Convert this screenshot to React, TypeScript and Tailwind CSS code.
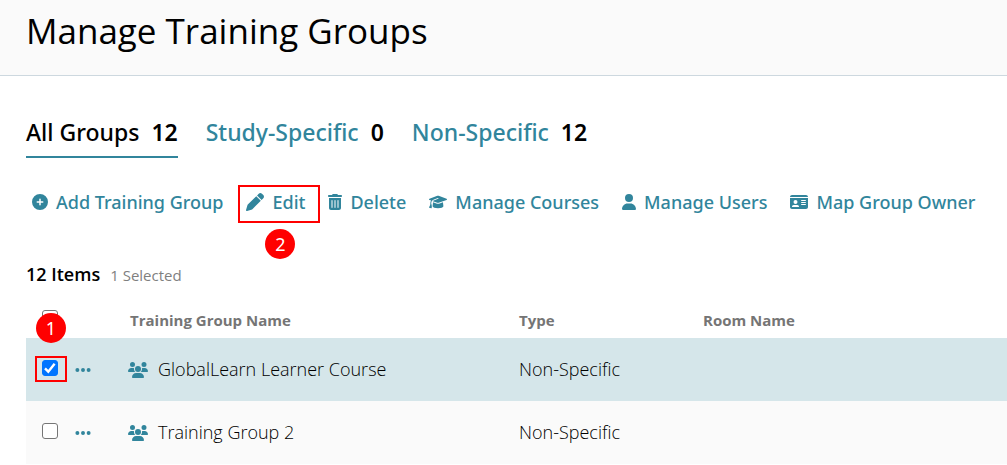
import { useState } from 'react';
import type { ReactNode } from 'react';
import type { IconType } from 'react-icons';
import {
  FaCirclePlus,
  FaEllipsis,
  FaGraduationCap,
  FaIdCard,
  FaPen,
  FaTrashCan,
  FaUser,
  FaUsers,
} from 'react-icons/fa6';

const tabs = [
  { label: 'All Groups', count: 12 },
  { label: 'Study-Specific', count: 0 },
  { label: 'Non-Specific', count: 12 },
];

const groups = [
  { id: 1, name: 'GlobalLearn Learner Course', type: 'Non-Specific', room: '' },
  { id: 2, name: 'Training Group 2', type: 'Non-Specific', room: '' },
];

function Step({ n, className }: { n: number; className: string }) {
  return (
    <span
      className={`pointer-events-none absolute z-10 flex size-[30px] items-center justify-center rounded-full bg-[#ff0000] font-['Noto_Sans',sans-serif] text-[18px] leading-none font-normal text-white ${className}`}
    >
      {n}
    </span>
  );
}

function Action({ icon: Icon, iconClass, children }: { icon: IconType; iconClass: string; children: ReactNode }) {
  return (
    <button type="button" className="flex cursor-pointer items-center gap-2 whitespace-nowrap">
      <Icon className={`shrink-0 ${iconClass}`} aria-hidden="true" />
      {children}
    </button>
  );
}

const box =
  'block size-4 cursor-pointer appearance-none rounded-[3px] border border-[#767676] bg-white checked:border-[#0075ff] checked:bg-[#0075ff]';

function Checkbox({ label, checked, onChange }: { label: string; checked: boolean; onChange: () => void }) {
  return (
    <span className="relative block size-4">
      <input type="checkbox" aria-label={label} className={box} checked={checked} onChange={onChange} />
      {checked && (
        <svg viewBox="0 0 16 16" className="pointer-events-none absolute inset-0 size-4" aria-hidden="true">
          <path d="M3 8.4 6.3 11.7 12.6 3.8" fill="none" stroke="#fff" strokeWidth="2.4" />
        </svg>
      )}
    </span>
  );
}

export default function App() {
  const [tab, setTab] = useState(0);
  const [selected, setSelected] = useState<number[]>([1]);
  const toggle = (id: number) =>
    setSelected((s) => (s.includes(id) ? s.filter((x) => x !== id) : [...s, id]));
  const all = selected.length === groups.length;

  return (
    <div className="bg-white font-['Open_Sans',sans-serif] text-black">
      <header className="border-b border-[#cdd8df] bg-[#fafafa] px-[26px] pt-1 pb-[17px]">
        <h1 className="text-[35px] leading-[54px] font-normal">Manage Training Groups</h1>
      </header>

      <main className="pt-[35px] pl-[26px]">
        <nav className="flex gap-7 font-['Noto_Sans',sans-serif] text-[23px] leading-[42px] font-medium">
          {tabs.map((t, i) => (
            <button
              key={t.label}
              type="button"
              onClick={() => setTab(i)}
              className={`flex cursor-pointer gap-3 border-b-2 pb-[3px] whitespace-nowrap ${
                i === tab ? 'border-[#31859c] text-black' : 'border-transparent text-[#31859c]'
              }`}
            >
              {t.label}
              <span className="font-semibold text-black">{t.count}</span>
            </button>
          ))}
        </nav>

        <div className="mt-6 flex h-10 items-center gap-[23px] pl-[6px] font-['Noto_Sans',sans-serif] text-[18px] font-medium text-[#31859c]">
          <Action icon={FaCirclePlus} iconClass="size-4">Add Training Group</Action>
          <div className="relative">
            <Action icon={FaPen} iconClass="size-[18px]">Edit</Action>
            <span className="pointer-events-none absolute -top-1 -right-[15px] -bottom-[7px] -left-2 border-2 border-[#ff0000]" />
            <Step n={2} className="top-10 left-[19px]" />
          </div>
          <Action icon={FaTrashCan} iconClass="h-4 w-[14px]">Delete</Action>
          <Action icon={FaGraduationCap} iconClass="size-[18px]">Manage Courses</Action>
          <Action icon={FaUser} iconClass="h-4 w-[14px]">Manage Users</Action>
          <Action icon={FaIdCard} iconClass="size-[18px]">Map Group Owner</Action>
        </div>

        <p className="mt-10 flex items-baseline gap-[10px] leading-6">
          <span className="text-[18px] font-semibold">12 Items</span>
          <span className="text-[15px] text-[#7f7f7f]">{selected.length} Selected</span>
        </p>

        <table className="mt-[15px] w-full table-fixed border-collapse text-left">
          <colgroup>
            <col className="w-[102px]" />
            <col className="w-[391px]" />
            <col className="w-[184px]" />
            <col />
          </colgroup>
          <thead>
            <tr className="h-9 text-[15px] text-[#757575]">
              <th className="pb-1 pl-4">
                <Checkbox
                  label="Select all groups"
                  checked={all}
                  onChange={() => setSelected(all ? [] : groups.map((g) => g.id))}
                />
              </th>
              <th className="pl-[2px] font-bold">Training Group Name</th>
              <th className="font-bold">Type</th>
              <th className="font-bold">Room Name</th>
            </tr>
          </thead>
          <tbody className="text-[18px] font-light">
            {groups.map((g, i) => (
              <tr key={g.id} className={`h-[63px] ${selected.includes(g.id) ? 'bg-[#d5e6ea]' : 'bg-[#fafafa]'}`}>
                <td className="pl-4">
                  <div className="flex items-center gap-4">
                    <div className="relative pb-1">
                      <Checkbox
                        label={`Select ${g.name}`}
                        checked={selected.includes(g.id)}
                        onChange={() => toggle(g.id)}
                      />
                      {i === 0 && (
                        <>
                          <span className="pointer-events-none absolute -top-1 -right-[9px] -bottom-[2px] -left-[7px] border-2 border-[#ff0000]" />
                          <Step n={1} className="-top-[47px] -left-[6px]" />
                        </>
                      )}
                    </div>
                    <button type="button" aria-label={`Actions for ${g.name}`} className="cursor-pointer text-[#31859c]">
                      <FaEllipsis className="size-[18px]" />
                    </button>
                  </div>
                </td>
                <td>
                  <div className="flex items-center gap-[10px]">
                    <FaUsers className="size-5 shrink-0 text-[#31859c]" aria-hidden="true" />
                    {g.name}
                  </div>
                </td>
                <td>{g.type}</td>
                <td>{g.room}</td>
              </tr>
            ))}
          </tbody>
        </table>
      </main>
    </div>
  );
}
